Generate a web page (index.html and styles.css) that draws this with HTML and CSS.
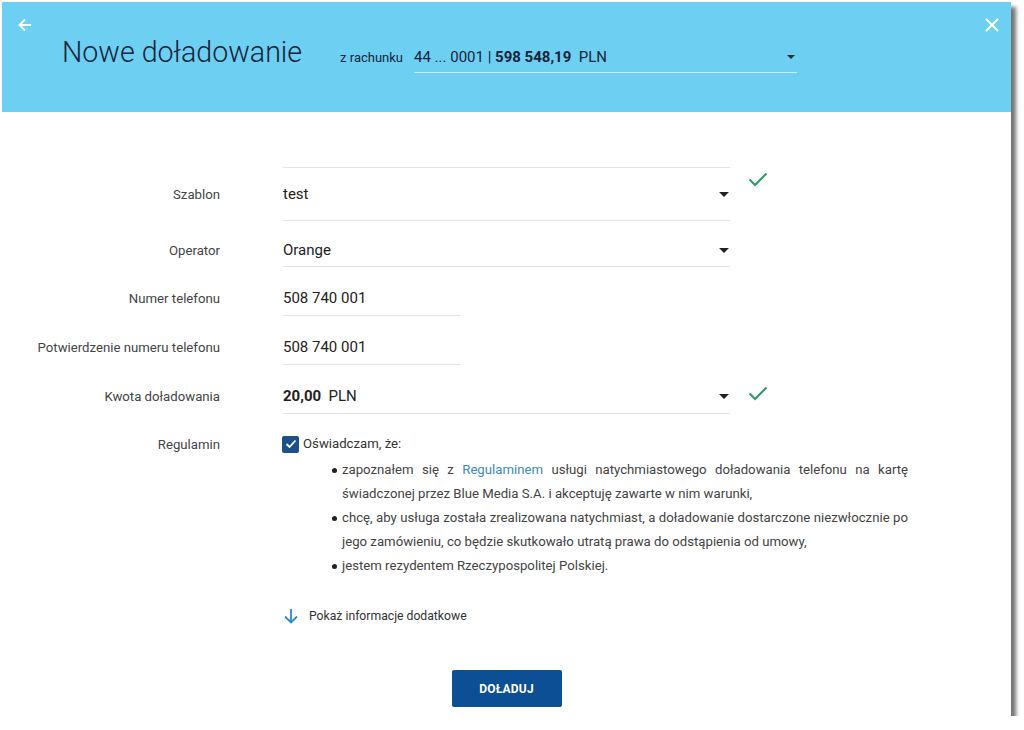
FILE: index.html
```html
<!DOCTYPE html>
<html lang="pl">
<head>
<meta charset="utf-8">
<title>Nowe doładowanie</title>
<link rel="stylesheet" href="styles.css">
</head>
<body>
<div class="window">
  <header class="header">
    <button class="icon-btn back" aria-label="Wstecz">
      <svg width="14" height="14" viewBox="0 0 14 14"><path d="M13 7H2M7 1.5L1.5 7L7 12.5" fill="none" stroke="#fff" stroke-width="1.8"/></svg>
    </button>
    <div class="head-main">
      <h1 class="title">Nowe doładowanie</h1>
      <span class="from">z rachunku</span>
      <div class="account">
        <span class="acc-text">44 ... 0001 | <b>598 548,19</b>&nbsp; PLN</span>
        <span class="caret"></span>
      </div>
    </div>
    <button class="icon-btn close" aria-label="Zamknij">
      <svg width="14" height="14" viewBox="0 0 14 14"><path d="M1 1L13 13M13 1L1 13" fill="none" stroke="#fff" stroke-width="1.8"/></svg>
    </button>
  </header>

  <main class="form">
    <div class="row row-first">
      <div class="label">Szablon</div>
      <div class="field wide framed"><span>test</span><span class="caret"></span></div>
      <svg class="ok ok-top" width="20" height="15" viewBox="0 0 20 15"><path d="M1.5 7.5L7 13L18.5 1.5" fill="none" stroke="#2f9a68" stroke-width="2"/></svg>
    </div>
    <div class="row row-op">
      <div class="label">Operator</div>
      <div class="field wide"><span>Orange</span><span class="caret"></span></div>
    </div>
    <div class="row">
      <div class="label">Numer telefonu</div>
      <div class="field narrow"><span>508 740 001</span></div>
    </div>
    <div class="row">
      <div class="label">Potwierdzenie numeru telefonu</div>
      <div class="field narrow"><span>508 740 001</span></div>
    </div>
    <div class="row">
      <div class="label">Kwota doładowania</div>
      <div class="field wide"><span><b>20,00</b>&nbsp; PLN</span><span class="caret"></span></div>
      <svg class="ok" width="20" height="15" viewBox="0 0 20 15"><path d="M1.5 7.5L7 13L18.5 1.5" fill="none" stroke="#2f9a68" stroke-width="2"/></svg>
    </div>
    <div class="row row-reg">
      <div class="label">Regulamin</div>
      <div class="terms">
        <div class="agree">
          <span class="checkbox"><svg width="12" height="10" viewBox="0 0 12 10"><path d="M1.5 5L4.5 8L10.5 1.5" fill="none" stroke="#fff" stroke-width="1.8"/></svg></span>
          <span>Oświadczam, że:</span>
        </div>
        <ul class="terms-list">
          <li><span>zapoznałem się z</span> <a href="#" class="link">Regulaminem</a> <span>usługi natychmiastowego doładowania telefonu na kartę</span> <span>świadczonej przez Blue Media S.A. i akceptuję zawarte w nim warunki,</span></li>
          <li><span>chcę, aby usługa została zrealizowana natychmiast, a doładowanie dostarczone niezwłocznie po</span> <span>jego zamówieniu, co będzie skutkowało utratą prawa do odstąpienia od umowy,</span></li>
          <li>jestem rezydentem Rzeczypospolitej Polskiej.</li>
        </ul>
        <div class="more">
          <svg width="16" height="16" viewBox="0 0 16 16"><path d="M8 1V14M2 8.5L8 14.5L14 8.5" fill="none" stroke="#2b8cc4" stroke-width="1.8"/></svg>
          <span>Pokaż informacje dodatkowe</span>
        </div>
      </div>
    </div>
    <div class="actions">
      <button class="btn">DOŁADUJ</button>
    </div>
  </main>
</div>
</body>
</html>
```

FILE: styles.css
```css
* { box-sizing: border-box; }

body {
  margin: 0;
  background: #fff;
  font-family: Roboto, "Liberation Sans", sans-serif;
  color: #222;
}

.window {
  margin: 2px 0 0 2px;
  width: 1009px;
  height: 714px;
  background: #fff;
  box-shadow: 5px 5px 4px rgba(0, 0, 0, 0.55);
  overflow: hidden;
}

/* Header */
.header {
  height: 110px;
  background: #6dd0f3;
  display: flex;
  align-items: flex-start;
  padding: 16px 12px 0 16px;
}

.icon-btn {
  border: 0;
  background: none;
  padding: 0;
  width: 14px;
  height: 14px;
  cursor: pointer;
  display: block;
}

.icon-btn svg { display: block; }

.close { margin-left: auto; }

.head-main {
  display: flex;
  align-items: baseline;
  margin-left: 30px;
  margin-top: 16px;
}

.title {
  margin: 0;
  font-size: 28.6px;
  line-height: 36px;
  font-weight: 300;
  color: #14243a;
}

.from {
  margin-left: 38px;
  font-size: 13px;
  color: #14243a;
}

.account {
  margin-left: 11px;
  width: 383px;
  display: flex;
  align-items: center;
  justify-content: space-between;
  font-size: 15px;
  line-height: 20px;
  color: #14243a;
  padding: 0 2px 5px 0;
  border-bottom: 1px solid rgba(255, 255, 255, 0.65);
}

.account b { font-weight: 700; }

.caret {
  width: 0;
  height: 0;
  border-left: 5px solid transparent;
  border-right: 5px solid transparent;
  border-top: 5px solid #222;
}

.account .caret {
  border-left-width: 4px;
  border-right-width: 4px;
  border-top-width: 4px;
  border-top-color: #1d2b3a;
}

/* Form */
.form {
  padding-top: 55px;
}

.row {
  display: flex;
  align-items: baseline;
  margin-top: 21px;
}

.row-first { margin-top: 0; }
.row-op { margin-top: 19px; }
.row-reg { margin-top: 20px; }

.label {
  width: 218px;
  margin-right: 63px;
  text-align: right;
  font-size: 13.2px;
  line-height: 20px;
  color: #444;
  flex-shrink: 0;
}

.field {
  display: flex;
  align-items: center;
  justify-content: space-between;
  font-size: 15px;
  line-height: 20px;
  color: #222;
  padding: 0 1px 6px 0;
  border-bottom: 1px solid #e2e2e2;
}

.field b { font-weight: 700; }

.row + .row .field { padding-bottom: 7px; }
.row-op .field { padding-bottom: 6px !important; }

.framed {
  border-top: 1px solid #e2e2e2;
  padding-top: 16px;
  padding-bottom: 16px;
}

.wide { width: 447px; }
.narrow { width: 177px; }

.ok {
  margin-left: 18px;
  display: inline-block;
}

.ok-top {
  align-self: flex-start;
  margin-top: 5px;
}

/* Terms */
.terms {
  width: 626px;
  margin-left: -1px;
}

.agree {
  display: flex;
  align-items: center;
  font-size: 13.2px;
  line-height: 20px;
  color: #333;
}

.checkbox {
  width: 17px;
  height: 17px;
  border-radius: 2px;
  background: #1d4f88;
  display: flex;
  align-items: center;
  justify-content: center;
  margin-right: 4px;
}

.checkbox svg { display: block; }

.terms-list {
  list-style: none;
  margin: 4px 0 0;
  padding: 0 0 0 60px;
  font-size: 13.2px;
  line-height: 24px;
  color: #444;
  text-align: justify;
}

.terms-list li {
  position: relative;
}

.terms-list li::before {
  content: "";
  position: absolute;
  left: -10px;
  top: 10px;
  width: 5px;
  height: 5px;
  border-radius: 50%;
  background: #222;
}

.link {
  color: #3d8ab8;
  text-decoration: none;
}

.more {
  margin-top: 28px;
  display: flex;
  align-items: center;
  font-size: 12.2px;
  line-height: 20px;
  color: #333;
}

.more svg {
  display: block;
  margin-right: 10px;
  margin-left: 1px;
}

.actions {
  display: flex;
  justify-content: center;
  margin-top: 44px;
}

.btn {
  width: 110px;
  height: 37px;
  border: 0;
  border-radius: 2px;
  background: #0c4f95;
  color: #fff;
  font-family: Roboto, "Liberation Sans", sans-serif;
  font-weight: 700;
  font-size: 12px;
  letter-spacing: 0.2px;
  cursor: pointer;
}
```
